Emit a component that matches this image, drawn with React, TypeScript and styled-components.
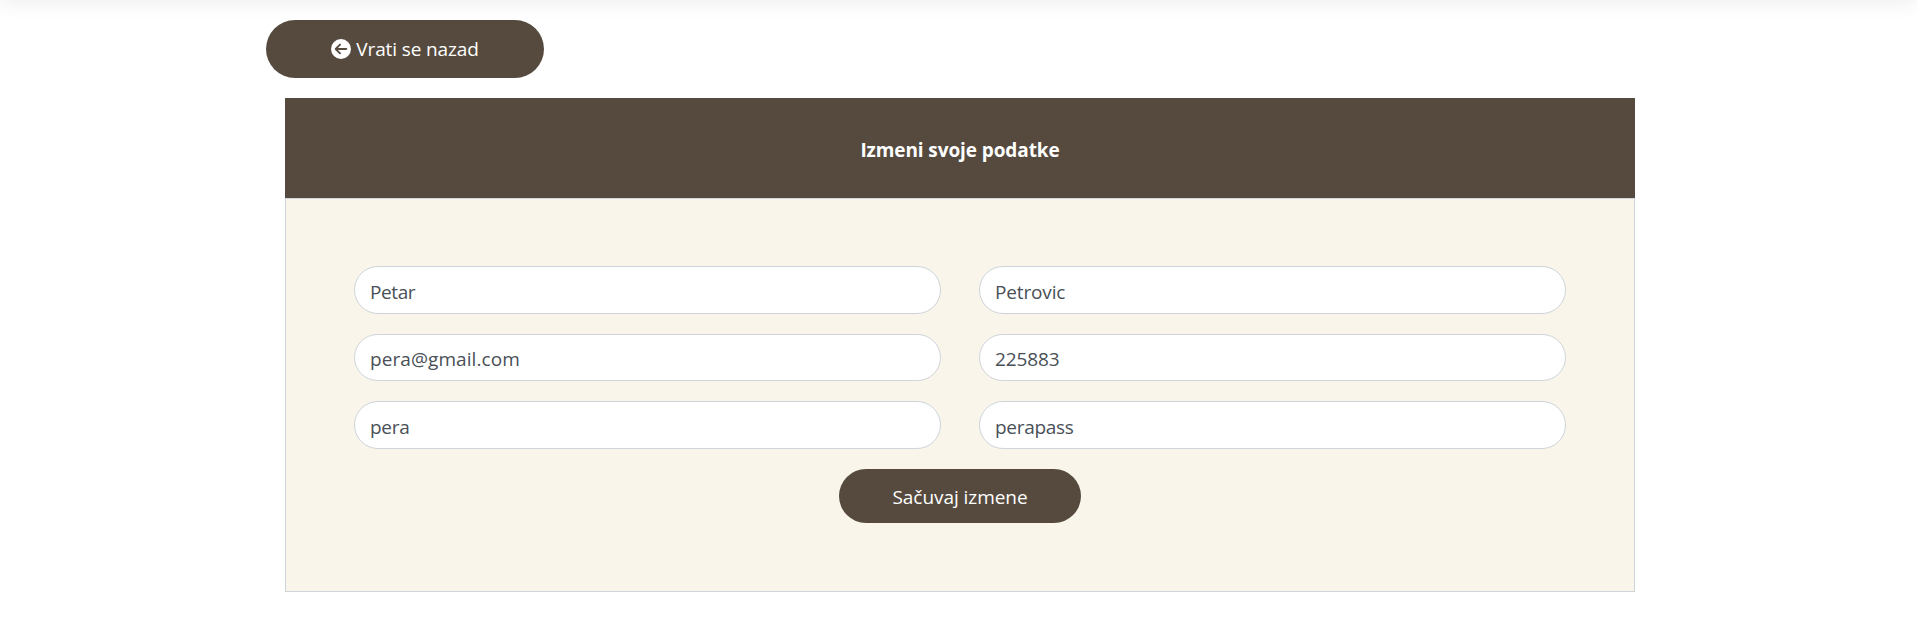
import React from "react";
import styled, { createGlobalStyle } from "styled-components";
import { FaCircleArrowLeft } from "react-icons/fa6";

const GlobalStyle = createGlobalStyle`
  *, *::before, *::after { box-sizing: border-box; }
  body {
    margin: 0;
    background: #fff;
    font-family: "Segoe UI", "Open Sans", "Noto Sans", sans-serif;
    font-size: 19px;
    line-height: 30px;
    overflow: hidden;
  }
`;

const NavbarShadow = styled.div`
  height: 80px;
  margin-top: -80px;
  box-shadow: 0 5px 18px rgba(0, 0, 0, 0.06);
`;

const Page = styled.main`
  width: 1388px;
  margin: 0 0 0 266px;
  padding-top: 20px;
`;

const PillButton = styled.button<{ $width: number; $height: number; $tracking: number }>`
  display: flex;
  align-items: center;
  justify-content: center;
  gap: 5px;
  width: ${(p) => p.$width}px;
  height: ${(p) => p.$height}px;
  padding: 0;
  border: 0;
  border-radius: 30px;
  background: #564a3e;
  color: #fff;
  font: inherit;
  letter-spacing: ${(p) => p.$tracking}px;
`;

const Card = styled.section`
  margin: 20px 19px 0;
`;

const CardHeader = styled.header`
  display: flex;
  align-items: center;
  justify-content: center;
  height: 100px;
  padding-top: 3px;
  background: #564a3e;
  color: #fff;
  font-weight: 700;
  letter-spacing: -0.1px;
`;

const CardBody = styled.form`
  display: flex;
  flex-direction: column;
  align-items: center;
  gap: 20px;
  height: 394px;
  padding: 67px 68px 0;
  border: 1px solid #ced4da;
  background: #f9f5ea;
`;

const Fields = styled.div`
  display: grid;
  grid-template-columns: 1fr 1fr;
  gap: 19.75px 38px;
  width: 100%;
`;

const Field = styled.input<{ $tracking: number }>`
  width: 100%;
  height: 47.75px;
  padding: 4px 15px 0;
  border: 1px solid #ced4da;
  border-radius: 25px;
  background: #fff;
  color: #495057;
  font: inherit;
  letter-spacing: ${(p) => p.$tracking}px;
`;

const SubmitLabel = styled.span`
  padding-top: 2px;
`;

const fields = [
  { name: "ime", value: "Petar", tracking: -0.4 },
  { name: "prezime", value: "Petrovic", tracking: -0.15 },
  { name: "email", value: "pera@gmail.com", tracking: 0.07 },
  { name: "telefon", value: "225883", tracking: -0.1 },
  { name: "korisnik", value: "pera", tracking: -0.3 },
  { name: "lozinka", value: "perapass", tracking: -0.3 },
];

export default function App() {
  return (
    <>
      <GlobalStyle />
      <NavbarShadow />
      <Page>
        <PillButton type="button" $width={278} $height={58} $tracking={-0.13}>
          <FaCircleArrowLeft size={20} />
          <span>Vrati se nazad</span>
        </PillButton>
        <Card>
          <CardHeader>Izmeni svoje podatke</CardHeader>
          <CardBody>
            <Fields>
              {fields.map((f) => (
                <Field key={f.name} name={f.name} defaultValue={f.value} $tracking={f.tracking} />
              ))}
            </Fields>
            <PillButton type="button" $width={242} $height={54} $tracking={-0.05}>
              <SubmitLabel>Sačuvaj izmene</SubmitLabel>
            </PillButton>
          </CardBody>
        </Card>
      </Page>
    </>
  );
}
